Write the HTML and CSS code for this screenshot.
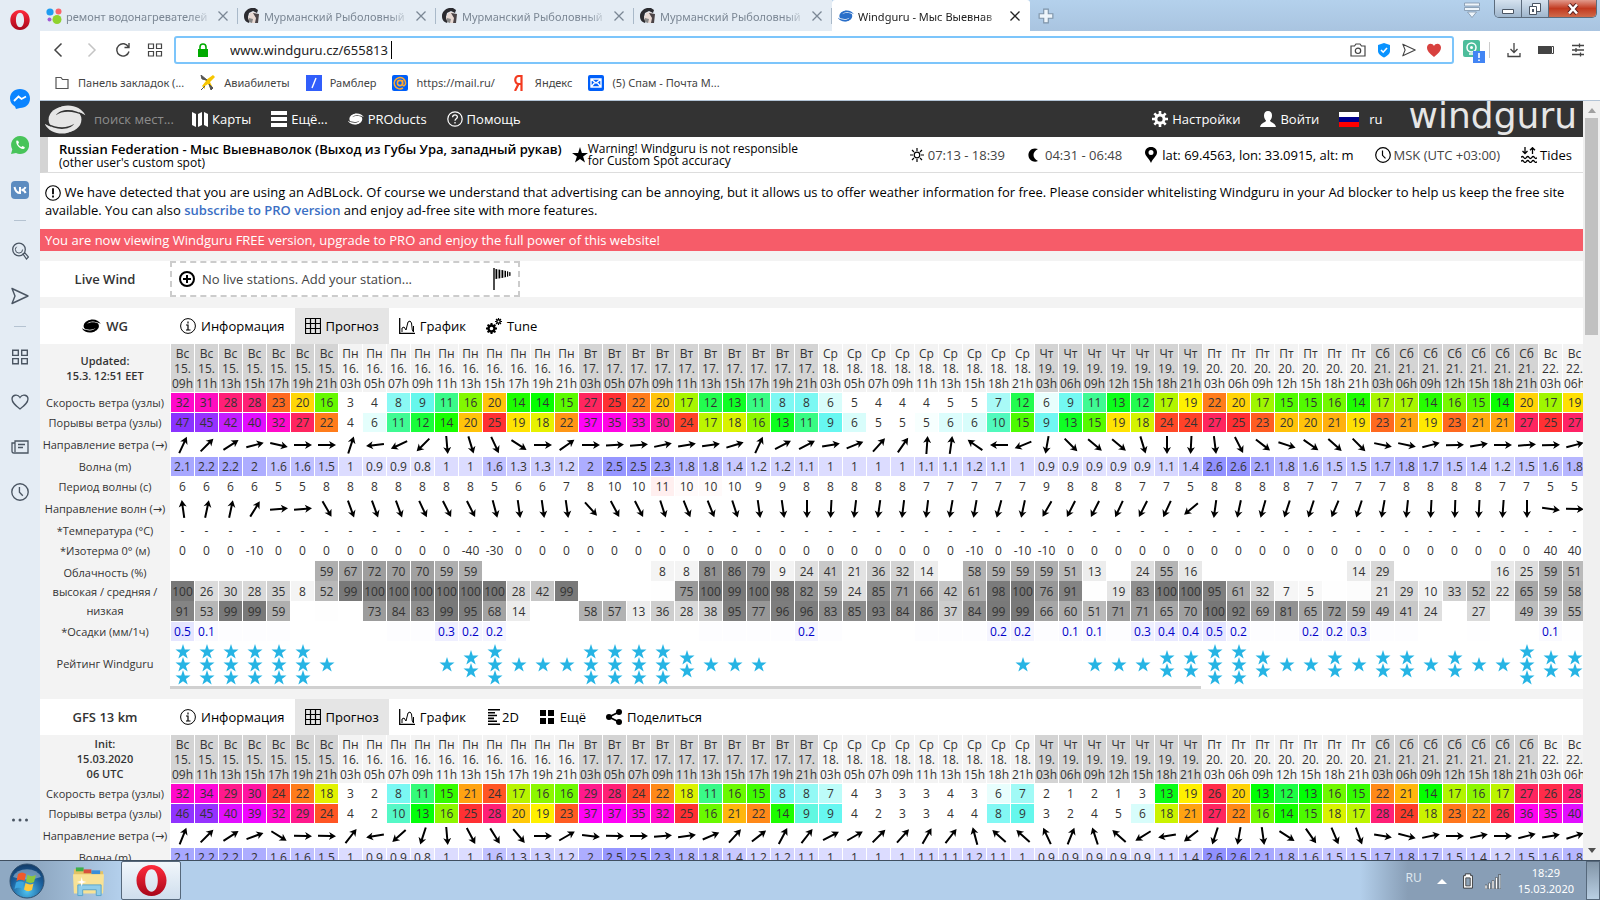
FILE: index.html
```html
<!DOCTYPE html>
<html lang="ru">
  <head>
    <meta charset="utf-8">
    <title>Windguru - Мыс Выевнаволок</title>
    <link rel="stylesheet" href="styles.css">
  </head>
  <body>
    <svg class="sprite" aria-hidden="true">
      <symbol id="i-close" viewBox="0 0 12 12"><path d="M1.500 1.500l9 9M10.500 1.500l-9 9" stroke="currentColor" stroke-width="1.300" fill="none"/></symbol>
      <symbol id="i-fish" viewBox="0 0 16 16"><path d="M7 0C3 1 0 4 0 8s2 6 5 7l1-3-2-3 1-4 4-2 4 2 1-3-3-2z" fill="#2b2b30"/><path d="M6 5l4-1 3 2 1 4-2 5H8l-3-2-1-3z" fill="#e8d9d3"/><path d="M9 5l6 1-1 9h-3l1-5z" fill="#4a4346"/><path d="M5 10l4 1-1 4-3-1z" fill="#888"/></symbol>
      <symbol id="i-swirl" viewBox="0 0 42 30">
        <ellipse cx="20.500" cy="15" rx="17" ry="13.500" fill="currentColor"/>
        <path d="M12 4C22-3 37 1 41.500 10.500 36 7 30 6 24 6z" fill="currentColor"/>
        <path d="M12 4C22-3 37 1 41.500 10.500 36 7 30 6 24 6z" fill="currentColor" transform="rotate(180 20.500 15)"/>
        <path d="M11 10.500C16 3.500 30 3 41 11l-2.500-.2C30 6 18 5.500 11 10.500z" style="fill:var(--cut)"/>
        <path d="M11 10.500C16 3.500 30 3 41 11l-2.500-.2C30 6 18 5.500 11 10.500z" style="fill:var(--cut)" transform="rotate(180 20.500 15)"/>
      </symbol>
      <symbol id="i-map" viewBox="0 0 16 16"><path d="M0 1l4 2v13l-4-2zM6 3l4-2v13l-4 2zM12 1l4 2v13l-4-2z" fill="currentColor"/></symbol>
      <symbol id="i-menu" viewBox="0 0 16 16"><path d="M0 0h16v4H0zM0 6h16v4H0zM0 12h16v4H0z" fill="currentColor"/></symbol>
      <symbol id="i-help" viewBox="0 0 16 16"><circle cx="8" cy="8" r="7.200" fill="none" stroke="currentColor" stroke-width="1.200"/><path d="M5.600 6.200C5.700 3 10.500 3.200 10.400 6 10.300 7.800 8 7.700 8 9.800M8 11v1.500" fill="none" stroke="currentColor" stroke-width="1.300"/></symbol>
      <symbol id="i-gear" viewBox="0 0 16 16"><path d="M8 0v16M0 8h16M2.300 2.300l11.400 11.400M13.700 2.300L2.300 13.700" stroke="currentColor" stroke-width="2.600"/><circle cx="8" cy="8" r="4.200" fill="none" stroke="currentColor" stroke-width="2.600"/><circle cx="8" cy="8" r="2.600" style="fill:var(--cut)"/></symbol>
      <symbol id="i-user" viewBox="0 0 16 16"><path d="M8 0c2.600 0 4 1.800 4 4.500C12 7 11 8.500 10 9.500c0 2 5 2 6 6.500H0c1-4.500 6-4.500 6-6.500-1-1-2-2.500-2-5C4 1.800 5.400 0 8 0z" fill="currentColor"/></symbol>
      <symbol id="i-star" viewBox="0 0 16 16"><path d="M8 0l1.900 5.900H16l-4.900 3.700L13 15.500l-5-3.600-5 3.600 1.900-5.900L0 5.900h6.100z" fill="currentColor"/></symbol>
      <symbol id="i-sun" viewBox="0 0 16 16"><circle cx="8" cy="8" r="2.800" fill="none" stroke="currentColor" stroke-width="1.200"/><path d="M8 1v3M8 12v3M1 8h3M12 8h3M3 3l2 2M11 11l2 2M13 3l-2 2M5 11l-2 2" stroke="currentColor" stroke-width="1.200"/></symbol>
      <symbol id="i-moon" viewBox="0 0 16 16"><path d="M12 2C6 0 2 4 2.500 9c.5 4 5 7 9.500 5-6-3-6-9 0-12z" fill="currentColor"/></symbol>
      <symbol id="i-pin" viewBox="0 0 16 16"><path d="M8 0c4 0 6 2.500 6 5.500C14 9 10 11 8 16 6 11 2 9 2 5.500 2 2.500 4 0 8 0zm0 3a2.500 2.500 0 1 0 0 5 2.500 2.500 0 0 0 0-5z" fill="currentColor" fill-rule="evenodd"/></symbol>
      <symbol id="i-clock" viewBox="0 0 16 16"><circle cx="8" cy="8" r="7.300" fill="none" stroke="currentColor" stroke-width="1.200"/><path d="M7.500 3.500v4.800l3 3" fill="none" stroke="currentColor" stroke-width="1.200"/></symbol>
      <symbol id="i-tides" viewBox="0 0 16 16"><path d="M4 0v6M1.500 4L4 6.500 6.500 4M11.500 7V1M9 3.200L11.500.7 14 3.200M0 10.500q1.300-2 2.700 0t2.700 0 2.700 0 2.700 0 2.700 0 2.500 0M0 14.500q1.300-2 2.700 0t2.700 0 2.700 0 2.700 0 2.700 0 2.500 0" fill="none" stroke="currentColor" stroke-width="1.300"/></symbol>
      <symbol id="i-warn" viewBox="0 0 16 16"><circle cx="8" cy="8" r="7.300" fill="none" stroke="currentColor" stroke-width="1.100"/><path d="M8 3.200v6M8 10.500v2" stroke="currentColor" stroke-width="1.800"/></symbol>
      <symbol id="i-plus" viewBox="0 0 16 16"><circle cx="8" cy="8" r="7" fill="none" stroke="currentColor" stroke-width="2"/><path d="M8 4v8M4 8h8" stroke="currentColor" stroke-width="2"/></symbol>
      <symbol id="i-sock" viewBox="0 0 18 22"><path d="M1 0v22" stroke="currentColor" stroke-width="1.400"/><path d="M2.500 1l1.800.3v9.400l-1.800.3zM5.500 1.500l1.800.3v8.400l-1.800.3zM8.500 2l1.800.3v7.400l-1.800.3zM11.500 2.600l1.500.3v6.200l-1.500.3zM14 3.300l1.200.3v4.800l-1.200.3zM16.200 4l1.300.3v3.400l-1.300.3z" fill="currentColor"/></symbol>
      <symbol id="i-info" viewBox="0 0 16 16"><circle cx="8" cy="8" r="7.400" fill="none" stroke="currentColor"/><path d="M8 3.500v2M6 7h2v4.500M6 12h4.500" fill="none" stroke="currentColor" stroke-width="1.200"/></symbol>
      <symbol id="i-grid" viewBox="0 0 16 16"><path d="M.5.500h15v15H.500zM.500 5.500h15M.500 10.500h15M5.500.500v15M10.500.500v15" fill="none" stroke="currentColor" stroke-width="1.200"/></symbol>
      <symbol id="i-graph" viewBox="0 0 16 16"><path d="M.7 0v15.300H16" fill="none" stroke="currentColor" stroke-width="1.300"/><path d="M3 14V10l2-1 2 3 2-8 2-1 1.500 2 .8 7 1.200 2V8" fill="none" stroke="currentColor"/></symbol>
      <symbol id="i-tune" viewBox="0 0 16 16"><circle cx="5.500" cy="10.500" r="3" fill="none" stroke="currentColor" stroke-width="2.400"/><path d="M5.500 5v2M5.500 14v2M0 10.500h2M9 10.500h2M1.600 6.600L3 8M8 13l1.400 1.400M1.600 14.400L3 13M8 8l1.400-1.400" stroke="currentColor" stroke-width="2"/><circle cx="12.500" cy="3.500" r="1.700" fill="none" stroke="currentColor" stroke-width="1.400"/><path d="M12.500 0v1.500M12.500 5.500V7M9 3.500h1.500M14.500 3.500H16M10 1l1 1M14 5l1 1M15 1l-1 1M11 5l-1 1" stroke="currentColor" stroke-width="1.200"/></symbol>
      <symbol id="i-2d" viewBox="0 0 16 16"><path d="M2 .8h12M2 3.700h7M2 6.500h9M2 9.400h6M2 12.300h9M2 15.200h12" fill="none" stroke="currentColor" stroke-width="1.600"/></symbol>
      <symbol id="i-blocks" viewBox="0 0 16 16"><path d="M1 1h6v6H1zM9 1h6v6H9zM1 9h6v6H1zM9 9h6v6H9z" fill="currentColor"/></symbol>
      <symbol id="i-share" viewBox="0 0 16 16"><path d="M13 3L3 8l10 5" fill="none" stroke="currentColor" stroke-width="1.800"/><circle cx="13" cy="3" r="3" fill="currentColor"/><circle cx="3" cy="8" r="3" fill="currentColor"/><circle cx="13" cy="13" r="3" fill="currentColor"/></symbol>
      <symbol id="i-send" viewBox="0 0 18 18"><path d="M1 1.500L17 9 1 16.500 4 9z" fill="none" stroke="currentColor" stroke-width="1.400" stroke-linejoin="round"/></symbol>
      <symbol id="i-tiles" viewBox="0 0 16 16"><path d="M1.500 2h5v4.500h-5zM9.500 2h5v4.500h-5zM1.500 9.500h5V14h-5zM9.500 9.500h5V14h-5z" fill="none" stroke="currentColor" stroke-width="1.200"/></symbol>
      <symbol id="i-opera" viewBox="0 0 32 32"><defs><linearGradient id="og" x1="0" y1="0" x2="0" y2="1"><stop offset="0" stop-color="#ff2b3c"/><stop offset="1" stop-color="#a8061a"/></linearGradient></defs><path d="M16 0c9 0 15.500 7 15.500 16S25 32 16 32 .5 25 .5 16 7 0 16 0zm0 4.500c-4 0-6.500 5-6.500 11.500S12 27.500 16 27.500 22.500 22.500 22.500 16 20 4.500 16 4.500z" fill="url(#og)" fill-rule="evenodd"/></symbol>
      <symbol id="i-arrow" viewBox="0 0 20 20"><path d="M9 19V6.500L6 8l4-7 4 7-3-1.500V19z" fill="#000"/></symbol>
    </svg>

    <div class="desktop">
      <nav class="sidebar">
        <svg class="opera"><use href="#i-opera"/></svg>
        <svg class="messenger" viewBox="0 0 20 20"><path d="M10 0c6 0 10 4 10 9.500S16 19 10 19l-4 1-1-2.500C2 16 0 13 0 9.500 0 4 4 0 10 0z" fill="#0a84ff"/><path d="M4 12l4.500-4.500 3 2.500L16 7.500" fill="none" stroke="#fff" stroke-width="1.800"/></svg>
        <svg viewBox="0 0 18 18"><path d="M9 0a9 9 0 1 1-4 17l-5 1 1.300-4.500A9 9 0 0 1 9 0z" fill="#48c45a"/><path d="M5.500 4.500c-1.500 3 3 9 7 8.500 1.500-.5 1.500-1.500 1-2l-2-1-1.200 1C9 10.500 7.500 9 7 8l1-1.200-.8-2z" fill="#fff"/></svg>
        <svg viewBox="0 0 18 18"><rect width="18" height="18" rx="4" fill="#5c8cc0"/><path d="M3.500 6c.8 4 3 6 5.500 6V6m5.500 0c-.8 2-2 2.800-4 3 2 0 3.500 1.500 4.200 3" fill="none" stroke="#fff" stroke-width="2"/></svg>
        <hr>
        <svg viewBox="0 0 18 18"><circle cx="8" cy="7.500" r="6.300" fill="none" stroke="currentColor" stroke-width="1.300"/><circle cx="8" cy="7.500" r="3.600" fill="none" stroke="currentColor" stroke-dasharray="14 9"/><path d="M12 12l2-1 3.500 4-2 2z" fill="none" stroke="currentColor" stroke-width="1.200"/></svg>
        <svg><use href="#i-send"/></svg>
        <hr>
        <svg><use href="#i-tiles"/></svg>
        <svg viewBox="0 0 18 18"><path d="M9 16C4 12 1 9.500 1 6c0-4 5.500-5.500 8-1.500C11.500.5 17 2 17 6c0 3.500-3 6-8 10z" fill="none" stroke="currentColor" stroke-width="1.300"/></svg>
        <svg viewBox="0 0 18 18"><path d="M4 3h13v12H3c-1.500 0-2-.8-2-2V5h3zM4 5v9M7 6.500h7M7 9.500h5" fill="none" stroke="currentColor" stroke-width="1.300"/></svg>
        <svg><use href="#i-clock"/></svg>
        <svg class="dots" viewBox="0 0 18 18"><circle cx="2.500" cy="9" r="1.500"/><circle cx="9" cy="9" r="1.500"/><circle cx="15.500" cy="9" r="1.500"/></svg>
      </nav>

      <div class="browser">
        <div class="tabs">
          <div class="tab">
            <svg viewBox="0 0 16 16"><circle cx="4" cy="4" r="3.600" fill="#1e9cf0"/><circle cx="12.500" cy="3.500" r="3" fill="#f9636a"/><circle cx="11" cy="11.500" r="4.500" fill="#8fd32e"/><circle cx="3.500" cy="11.500" r="2" fill="#a05bd6"/></svg>
            <span>ремонт водонагревателей</span><button aria-label="Закрыть"><svg><use href="#i-close"/></svg></button>
          </div>
          <div class="tab"><svg><use href="#i-fish"/></svg><span>Мурманский Рыболовный</span><button aria-label="Закрыть"><svg><use href="#i-close"/></svg></button></div>
          <div class="tab"><svg><use href="#i-fish"/></svg><span>Мурманский Рыболовный</span><button aria-label="Закрыть"><svg><use href="#i-close"/></svg></button></div>
          <div class="tab"><svg><use href="#i-fish"/></svg><span>Мурманский Рыболовный</span><button aria-label="Закрыть"><svg><use href="#i-close"/></svg></button></div>
          <div class="tab current"><svg class="fav"><use href="#i-swirl"/></svg><span>Windguru - Мыс Выевнав</span><button aria-label="Закрыть"><svg><use href="#i-close"/></svg></button></div>
          <button class="new-tab" aria-label="Новая вкладка"><svg viewBox="0 0 14 14"><path d="M5 1h4v4h4v4H9v4H5V9H1V5h4z" fill="#eef5fb" stroke="#7d93a8"/></svg></button>
          <svg class="tab-menu" viewBox="0 0 16 16"><path d="M.5 1h15v3H.500zM.500 5.500h15v3H.500zM3.500 10h9L8 15.500z" fill="#eef5fb" stroke="#7d93a8" stroke-width=".8"/></svg>
          <div class="window-buttons">
            <button aria-label="Свернуть"><svg viewBox="0 0 12 12"><path d="M.5 6.500h11v4H.500z" fill="#fff" stroke="#4a5563"/></svg></button>
            <button aria-label="Развернуть"><svg viewBox="0 0 12 12"><path d="M3.500.5h8v8h-8z" fill="#fff" stroke="#4a5563"/><path d="M.5 3.500h7v8h-7z" fill="#fff" stroke="#4a5563"/><path d="M3 6h2v3H3z" fill="#4a5563"/></svg></button>
            <button class="win-close" aria-label="Закрыть окно"><svg viewBox="0 0 12 12"><path d="M2 1.500l8 9M10 1.500l-8 9" stroke="#5a2020" stroke-width="4.400"/><path d="M2 1.500l8 9M10 1.500l-8 9" stroke="#fff" stroke-width="2.600"/></svg></button>
          </div>
        </div>

        <div class="address-row">
          <svg viewBox="0 0 16 16"><path d="M10.500 1.500L4 8l6.500 6.500" fill="none" stroke="currentColor" stroke-width="1.500"/></svg>
          <svg class="off" viewBox="0 0 16 16"><path d="M5.500 1.500L12 8l-6.500 6.500" fill="none" stroke="currentColor" stroke-width="1.500"/></svg>
          <svg viewBox="0 0 16 16"><path d="M13.500 5A6.200 6.200 0 1 0 14 9.500M14 1v4.500H9.500" fill="none" stroke="currentColor" stroke-width="1.400"/></svg>
          <svg><use href="#i-tiles"/></svg>
          <div class="address">
            <svg class="lock" viewBox="0 0 14 14"><path d="M2 6h10v8H2z" fill="#0a0"/><path d="M4 6.500V4q0-3 3-3t3 3v2.500" fill="none" stroke="#0a0" stroke-width="1.600"/></svg>
            <div class="url-wrap"><input type="text" value="www.windguru.cz/655813" aria-label="Адрес"><i class="caret"></i></div>
            <svg viewBox="0 0 16 16"><path d="M1 4h3.500L6 2h4l1.500 2H15v10H1z" fill="none" stroke="#444" stroke-width="1.200"/><circle cx="8" cy="8.800" r="2.700" fill="none" stroke="#444" stroke-width="1.200"/></svg>
            <svg viewBox="0 0 16 16"><path d="M8 1l6 2v6c0 3-3 5-6 6.500C5 14 2 12 2 9V3z" fill="#0a93ff"/><path d="M5 8l2.200 2.200L11 6" fill="none" stroke="#fff" stroke-width="1.600"/></svg>
            <svg class="small-send"><use href="#i-send"/></svg>
            <svg viewBox="0 0 16 16"><path d="M8 15C3 11 1 8.500 1 5.500 1 1 6.500.5 8 4c1.500-3.500 7-3 7 1.500C15 8.500 13 11 8 15z" fill="#d8413f"/></svg>
          </div>
          <svg class="ext" viewBox="0 0 24 24"><rect width="17" height="17" rx="2" fill="#4dbd9b"/><circle cx="8.500" cy="7.500" r="4.500" fill="none" stroke="#fff" stroke-width="1.500"/><circle cx="8.500" cy="7.500" r="1.500" fill="#fff"/><path d="M6 14h5" stroke="#fff" stroke-width="1.500"/><path d="M10 11h12v12H10z" fill="#4285f4"/><path d="M16 13v5M16 19.500v1.500" stroke="#fff" stroke-width="1.600"/></svg>
          <i class="sep"></i>
          <svg viewBox="0 0 16 16"><path d="M8 1v9M4.500 7L8 10.500 11.500 7M2 11v3.500h12V11" fill="none" stroke="currentColor" stroke-width="1.300"/></svg>
          <svg viewBox="0 0 16 16"><path d="M0 4h13v8H0z" fill="#444"/><path d="M13.500 4.500h2v7h-2z" fill="none" stroke="#444"/></svg>
          <svg viewBox="0 0 16 16"><path d="M2 3.500h12M2 8h12M2 12.500h12M9.500 1.500v4M6 6v4M10.500 10.500v4" stroke="currentColor" stroke-width="1.300"/></svg>
        </div>

        <div class="bookmarks">
          <a href="#" class="folder"><svg viewBox="0 0 16 16"><path d="M2 2.500h5L8.500 4.500H14v9H2z" fill="none" stroke="#555" stroke-width="1.200"/></svg>Панель закладок (...</a>
          <a href="#"><svg viewBox="0 0 16 16"><path d="M1 3l5 2 7-5 2 2-5 5 3 6-1.500 1L8 9l-3 2v3l-3-3 4-5z" fill="#f7c600"/><path d="M7 5L1 0l1 4zM9 9l2 6 2-2zM1 15l4-4" fill="#555" stroke="#555"/></svg>Авиабилеты</a>
          <a href="#"><svg viewBox="0 0 16 16"><path d="M0 0h16v16H0z" fill="#315efb"/><path d="M10 3L6 13" stroke="#fff" stroke-width="1.400"/></svg>Рамблер</a>
          <a href="#"><svg viewBox="0 0 16 16"><rect width="16" height="16" rx="2" fill="#005ff9"/><circle cx="8" cy="8" r="2.600" fill="none" stroke="#ffa930" stroke-width="1.600"/><path d="M10.600 5v4c0 3 3 2 3-1A5.700 5.700 0 1 0 11 13" fill="none" stroke="#ffa930" stroke-width="1.500"/></svg>https://mail.ru/</a>
          <a href="#"><svg viewBox="0 0 16 16"><path d="M10.500 16V1H8C3 1 3 9 8 9h2M7.500 9L4 16" fill="none" stroke="#f33a1f" stroke-width="2.200"/></svg>Яндекс</a>
          <a href="#"><svg viewBox="0 0 16 16"><rect width="16" height="16" rx="2" fill="#005ff9"/><path d="M3 4h10v8H3zM3 4l5 4 5-4M3 12l3.500-4M13 12L9.500 8" fill="none" stroke="#fff" stroke-width="1.400"/></svg>(5) Спам - Почта М...</a>
        </div>

        <div class="viewport">
          <div class="page">
            <header class="top">
              <svg class="logo"><use href="#i-swirl"/></svg>
              <input class="search" type="text" placeholder="поиск мест..." aria-label="поиск мест">
              <a href="#"><svg><use href="#i-map"/></svg>Карты</a>
              <a href="#"><svg><use href="#i-menu"/></svg>Ещё...</a>
              <a href="#"><svg><use href="#i-swirl"/></svg>PROducts</a>
              <a href="#"><svg><use href="#i-help"/></svg>Помощь</a>
              <a href="#" class="push"><svg><use href="#i-gear"/></svg>Настройки</a>
              <a href="#"><svg><use href="#i-user"/></svg>Войти</a>
              <a href="#" class="lang"><i class="flag"></i>ru</a>
              <span class="wordmark">windguru</span>
            </header>

            <section class="spot">
              <div class="spot-name">
                <h1>Russian Federation - Мыс Выевнаволок (Выход из Губы Ура, западный рукав)</h1>
                <p>(other user's custom spot)</p>
              </div>
              <svg class="spot-star"><use href="#i-star"/></svg>
              <p class="spot-warning">Warning! Windguru is not responsible<br>for Custom Spot accuracy</p>
              <ul class="spot-info">
                <li><svg><use href="#i-sun"/></svg>07:13 - 18:39</li>
                <li><svg><use href="#i-moon"/></svg>04:31 - 06:48</li>
                <li class="dark"><svg><use href="#i-pin"/></svg>lat: 69.4563, lon: 33.0915, alt: m</li>
                <li><svg><use href="#i-clock"/></svg>MSK (UTC +03:00)</li>
                <li class="dark"><svg><use href="#i-tides"/></svg>Tides</li>
              </ul>
            </section>

            <p class="adblock"><svg><use href="#i-warn"/></svg> We have detected that you are using an AdBLock. Of course we understand that advertising can be annoying, but it allows us to offer weather information for free. Please consider whitelisting Windguru in your Ad blocker to help us keep the free site available. You can also <a href="#">subscribe to PRO version</a> and enjoy ad-free site with more features.</p>
            <p class="upgrade">You are now viewing Windguru FREE version, upgrade to PRO and enjoy the full power of this website!</p>

            <section class="strip live">
              <h2>Live Wind</h2>
              <button class="add-station"><svg><use href="#i-plus"/></svg><span>No live stations. Add your station...</span><svg class="sock"><use href="#i-sock"/></svg></button>
            </section>

            <section class="model">
              <div class="strip">
                <h2><svg class="wg"><use href="#i-swirl"/></svg>WG</h2>
                <button><svg><use href="#i-info"/></svg>Информация</button>
                <button class="on"><svg><use href="#i-grid"/></svg>Прогноз</button>
                <button><svg><use href="#i-graph"/></svg>График</button>
                <button><svg><use href="#i-tune"/></svg>Tune</button>
              </div>
              <table id="wg"></table>
              <div class="hscroll"><i></i></div>
            </section>

            <section class="model">
              <div class="strip">
                <h2>GFS 13 km</h2>
                <button><svg><use href="#i-info"/></svg>Информация</button>
                <button class="on"><svg><use href="#i-grid"/></svg>Прогноз</button>
                <button><svg><use href="#i-graph"/></svg>График</button>
                <button class="tight"><svg><use href="#i-2d"/></svg>2D</button>
                <button><svg><use href="#i-blocks"/></svg>Ещё</button>
                <button><svg><use href="#i-share"/></svg>Поделиться</button>
              </div>
              <table id="gfs"></table>
            </section>
          </div>
          <div class="vscroll">
            <svg viewBox="0 0 10 6"><path d="M1 6l4-5 4 5z" fill="#a0a0a0"/></svg>
            <i></i>
            <svg viewBox="0 0 10 6"><path d="M1 0l4 5 4-5z" fill="#505050"/></svg>
          </div>
        </div>
      </div>
    </div>

    <footer class="taskbar">
      <button class="start" aria-label="Пуск"><svg viewBox="0 0 36 36"><defs><radialGradient id="orb" cx=".5" cy=".8" r=".8"><stop offset="0" stop-color="#4fc3f0"/><stop offset=".6" stop-color="#1b5f9c"/><stop offset="1" stop-color="#123a66"/></radialGradient></defs><circle cx="18" cy="18" r="17" fill="url(#orb)" stroke="#30506f"/><path d="M4 14A15 12 0 0 1 32 14q-14 5-28 0z" fill="#fff" opacity=".35"/><path d="M9 11q4-3 8 0l-1.500 7q-4-2.500-8 0z" fill="#f0592a"/><path d="M18.500 11.500q4 3 8.500.5l-2 7q-4 2-8-.5z" fill="#8cc63f"/><path d="M7 19.500q4-2.500 8 0l-1.500 6.500q-4-2.500-8 0z" fill="#3ca5e0"/><path d="M16.500 20q4 2.500 8 .5l-1.500 6.500q-4 2.500-8-.5z" fill="#ffc93c"/></svg></button>
      <button class="explorer" aria-label="Проводник"><svg viewBox="0 0 34 32"><path d="M2 4h10l2 2h18v22H2z" fill="#e3c264"/><path d="M4 2h8v4H4z" fill="#3fae49"/><path d="M12 4h8v4h-8z" fill="#d9503c"/><path d="M20 5h9v4h-9z" fill="#3a8fd8"/><path d="M1 9h32l-1 20H2z" fill="#f8e296"/><path d="M6 20h24v11h-5v-6H11v6H6z" fill="#8fcdea" stroke="#5aa5cc"/><path d="M10 12l1 4 4 1-4 1-1 4-1-4-4-1 4-1z" fill="#fff"/></svg></button>
      <button class="app" aria-label="Opera"><svg><use href="#i-opera"/></svg></button>
      <div class="tray">
        <span class="kb">RU</span>
        <svg class="up" viewBox="0 0 10 6"><path d="M0 6l5-5 5 5z" fill="#fff"/></svg>
        <svg viewBox="0 0 16 18"><path d="M5 1h6v2h2v14H3V3h2z" fill="#fff" stroke="#333"/><path d="M5.500 5.500h5v9h-5z" fill="#8da3b8" stroke="#444"/></svg>
        <svg viewBox="0 0 16 16"><path d="M0 12h2v4H0zM3.500 10h2v6h-2zM7 7.500h2V16H7zM10.500 4.500h2V16h-2z" fill="#fff" stroke="#333" stroke-width=".5"/><path d="M13.500 1.500H16V16h-2.500z" fill="#b9c6d2" stroke="#333" stroke-width=".5"/></svg>
        <time>18:29<br>15.03.2020</time>
      </div>
      <div class="show-desktop"></div>
    </footer>
    <script src="forecast.js"></script>
  </body>
</html>
```

FILE: styles.css
```css
* {
  box-sizing: border-box;
}

body {
  display: flex;
  flex-direction: column;
  height: 100vh;
  margin: 0;
  overflow: hidden;
  font-family: "Open Sans", "Noto Sans", sans-serif;
  font-size: 13px;
  color: #333;
}

h1, h2, p, ul {
  margin: 0;
  padding: 0;
  list-style: none;
}

a {
  color: inherit;
  text-decoration: none;
}

button, input {
  padding: 0;
  border: 0;
  background: none;
  color: inherit;
  font: inherit;
}

svg {
  flex: none;
  width: 16px;
  height: 16px;
}

.sprite {
  position: absolute;
  width: 0;
  height: 0;
}

.desktop {
  display: flex;
  flex: 1;
  min-height: 0;
}

/* Opera sidebar */
.sidebar {
  display: flex;
  flex-direction: column;
  align-items: center;
  gap: 27px;
  width: 40px;
  padding: 10px 0 31px;
  background: #e4ecf4;
  color: #4a5562;
}

.sidebar svg {
  width: 18px;
  height: 18px;
}

.sidebar .opera {
  width: 20px;
  height: 20px;
  margin-bottom: 32px;
}

.sidebar .messenger {
  width: 20px;
  height: 20px;
}

.sidebar hr {
  width: 12px;
  margin: -6px 0;
  border: 0;
  border-top: 1px solid #b5c3d1;
}

.sidebar .dots {
  margin-top: auto;
  fill: #4a5562;
}

.browser {
  display: flex;
  flex: 1;
  flex-direction: column;
  min-width: 0;
  background: #fff;
}

/* tabs */
.tabs {
  display: flex;
  align-items: stretch;
  height: 31px;
  background: linear-gradient(#b4d1ec, #a9c4e0);
  font-family: "Noto Sans", sans-serif;
  font-size: 11px;
}

.tab {
  display: flex;
  align-items: center;
  gap: 4px;
  width: 198px;
  padding: 1px 9px 0 6px;
  background: linear-gradient(90deg, #a9b9c9, #a9b9c9) right center / 1px 16px no-repeat #e4ecf4;
  color: #7b8794;
}

.tab span {
  flex: 1;
  overflow: hidden;
  white-space: nowrap;
  mask-image: linear-gradient(90deg, #000 85%, transparent);
}

.tab button {
  display: flex;
}

.tab button svg {
  width: 12px;
  height: 12px;
}

.tab.current {
  border-radius: 3px 3px 0 0;
  background: #fff;
  color: #222;
}

.tab .fav {
  --cut: #fff;
  color: #2a6fc9;
}

.new-tab {
  display: flex;
  align-items: center;
  padding-left: 8px;
}

.tab-menu {
  margin: 2px 14px 0 auto;
}

.window-buttons {
  display: flex;
  height: 18px;
  margin-right: 3px;
  border: 1px solid #5b6b7c;
  border-top: 0;
  border-radius: 0 0 5px 5px;
  overflow: hidden;
}

.window-buttons button {
  display: flex;
  align-items: center;
  justify-content: center;
  width: 27px;
  border-right: 1px solid #5b6b7c;
  background: linear-gradient(#d5e2ef, #9fb6cd);
}

.window-buttons svg {
  width: 12px;
  height: 12px;
}

.window-buttons .win-close {
  width: 47px;
  border-right: 0;
  background: linear-gradient(#e29a8c, #c23a20 50%, #d06a4a);
}

/* address bar */
.address-row {
  display: flex;
  align-items: center;
  gap: 16px;
  height: 38px;
  padding: 0 14px 0 11px;
  color: #444;
}

.address-row .off {
  color: #c4c4c4;
}

.address {
  display: flex;
  flex: 1;
  align-items: center;
  gap: 10px;
  height: 28px;
  margin-left: -5px;
  padding: 0 10px 0 20px;
  border: 2px solid #7cc5fb;
  border-radius: 3px;
  color: #444;
}

.address .lock {
  width: 14px;
  height: 14px;
}

.address .small-send {
  width: 14px;
  height: 14px;
}

.url-wrap {
  display: flex;
  flex: 1;
  align-items: center;
  padding-left: 10px;
}

.address input {
  width: 161px;
  outline: 0;
  color: #222;
  font-family: "Noto Sans", sans-serif;
  font-size: 13px;
}

.caret {
  width: 1px;
  height: 18px;
  background: #000;
}

.address-row .ext {
  width: 24px;
  height: 24px;
  margin: 4px -14px 0 -7px;
}

.sep {
  width: 1px;
  height: 16px;
  background: #ccc;
}

.bookmarks {
  display: flex;
  align-items: center;
  gap: 16px;
  height: 32px;
  padding: 0 14px 4px;
  border-bottom: 1px solid #b3c4d6;
  color: #444;
  font-family: "Noto Sans", sans-serif;
  font-size: 11px;
}

.bookmarks a {
  display: flex;
  align-items: center;
  gap: 8px;
}

/* page */
.viewport {
  display: flex;
  flex: 1;
  min-height: 0;
}

.page {
  flex: 1;
  min-width: 0;
  overflow: hidden;
  background: #f3f3f3;
}

.top {
  --cut: #333;
  display: flex;
  align-items: center;
  gap: 20px;
  height: 36px;
  padding: 0 6px 0 5px;
  background: #333;
  color: #fff;
}

.top .logo {
  width: 41px;
  height: 29px;
  margin-right: -12px;
  color: #e6e6e6;
}

.search {
  width: 80px;
  margin-right: -2px;
}

.search::placeholder {
  color: #8c8c8c;
  opacity: 1;
}

.top a {
  display: flex;
  align-items: center;
  gap: 4px;
}

.top .push {
  margin-left: auto;
}

.top .lang {
  gap: 10px;
}

.flag {
  width: 20px;
  height: 15px;
  background: linear-gradient(#fff 33%, #00008b 33% 66%, #f00 66%);
}

.wordmark {
  margin: -6px 0 0 6px;
  color: #e6e6e6;
  font-family: "DejaVu Sans", sans-serif;
  font-size: 36px;
  line-height: 36px;
}

.spot {
  display: flex;
  align-items: center;
  height: 36px;
  padding: 0 11px;
  border-bottom: 1px solid #ddd;
  border-left: 8px solid #d4d4d4;
  background: #fff;
  color: #000;
}

.spot h1 {
  font-size: 13px;
  font-weight: 600;
  line-height: 16px;
}

.spot p {
  font-size: 12px;
  line-height: 12px;
}

.spot-star {
  margin-left: 10px;
}

.spot-info {
  display: flex;
  gap: 21px;
  margin-left: auto;
  color: #444;
}

.spot-info li {
  display: flex;
  align-items: center;
  gap: 3px;
}

.spot-info svg,
.spot-info .dark {
  color: #000;
}

.adblock {
  padding: 10px 5px;
  background: #fff;
  color: #000;
  line-height: 18px;
}

.adblock svg {
  vertical-align: -4px;
}

.adblock a {
  color: #3b6fc4;
  font-weight: 600;
}

.upgrade {
  padding: 0 5px;
  background: #f65c69;
  color: #fff;
  line-height: 22px;
}

.strip {
  --cut: #fff;
  display: flex;
  height: 36px;
  background: #fff;
}

.strip h2 {
  display: flex;
  align-items: center;
  justify-content: center;
  gap: 5px;
  width: 130px;
  font-size: 13px;
  font-weight: 600;
}

.strip .wg {
  width: 19px;
  color: #000;
}

.strip > button {
  display: flex;
  align-items: center;
  gap: 5px;
  padding: 0 10px;
  color: #000;
}

.strip > .tight {
  gap: 0;
}

.strip > .on {
  background: #e5e5e5;
}

.live {
  margin: 10px 0 11px;
}

.strip > .add-station {
  gap: 7px;
  width: 350px;
  padding: 0 7px;
  border: 2px dashed #ccc;
}

.add-station span {
  color: #444;
}

.add-station .sock {
  width: 18px;
  height: 22px;
  margin-left: auto;
}

.model {
  margin-bottom: 10px;
}

/* forecast table */
table {
  width: 1px;
  table-layout: fixed;
  border-spacing: 0;
  background: #fff;
  font-size: 12px;
  line-height: 15px;
}

.label-col {
  width: 130px;
}

.hour-col {
  width: 24px;
}

th, td {
  height: 20px;
  padding: 0;
  text-align: center;
  white-space: nowrap;
}

th {
  padding-bottom: 2px;
  background: #f3f3f3;
  font-family: "Open Sans", "DejaVu Sans", sans-serif;
  font-size: 11px;
  font-weight: 400;
}

td {
  border: solid #fff;
  border-width: 0 0 1px 1px;
}

.head th {
  font-weight: 600;
}

.head td {
  height: 49px;
  background: #f3f3f3;
}

.head .odd {
  background: #d4d4d4;
}

.arrows td {
  height: 24px;
}

.arrows svg {
  display: block;
  width: 20px;
  height: 20px;
  margin: auto;
}

.cloud td {
  border-bottom: 0;
}

.cloud th {
  padding: 0;
  line-height: 19px;
}

.cloud-last td {
  height: 21px;
}

.rain td {
  color: #0000c8;
}

.stars td {
  height: 44px;
  border-bottom: 0;
}

.stars svg {
  display: block;
  height: 15px;
  margin: -2px auto;
  color: #26b4e4;
}

.hscroll {
  margin-left: 130px;
  background: #fff;
}

.hscroll i {
  display: block;
  width: 73%;
  height: 3px;
  background: #d0d0d0;
}

.vscroll {
  display: flex;
  flex-direction: column;
  align-items: center;
  width: 17px;
  padding: 6px 0;
  background: #f0f0f0;
}

.vscroll svg {
  width: 10px;
  height: 6px;
}

.vscroll i {
  width: 13px;
  height: 29%;
  margin: 5px 0 auto;
  background: #c1c1c1;
}

/* taskbar */
.taskbar {
  display: flex;
  align-items: stretch;
  height: 40px;
  border-top: 1px solid #3f4f60;
  background: linear-gradient(90deg, #8fa9c3, #8fa9c3 40px, #b3cfeb 120px, #b3cfeb 85%, #889eb6 88%);
}

.start {
  display: flex;
  align-items: center;
  padding: 0 9px;
}

.start svg {
  width: 36px;
  height: 36px;
}

.explorer {
  display: flex;
  align-items: center;
  width: 67px;
  padding: 0 18px;
}

.explorer svg {
  width: 33px;
  height: 32px;
}

.app {
  display: flex;
  align-items: center;
  justify-content: center;
  width: 60px;
  border: 1px solid #56687b;
  border-radius: 2px;
  background: linear-gradient(#f1f6fb, #cfdeed);
}

.app svg {
  width: 31px;
  height: 31px;
}

.tray {
  display: flex;
  align-items: center;
  gap: 9px;
  margin-left: auto;
  padding-right: 12px;
  color: #fff;
  font-family: "Noto Sans", sans-serif;
  font-size: 11px;
  line-height: 16px;
  text-align: center;
}

.kb {
  margin: -6px 6px 0 0;
  color: #dde6ee;
  font-size: 12px;
}

.tray .up {
  width: 10px;
  height: 6px;
  margin-right: 4px;
}

.tray time {
  margin-left: 8px;
}

.show-desktop {
  width: 14px;
  border: 1px solid #56687b;
  background: linear-gradient(#8295a8, #b9cfe3);
}
```

FILE: forecast.js
```js
var days = [
  ['Вс', 15, '09 11 13 15 17 19 21'],
  ['Пн', 16, '03 05 07 09 11 13 15 17 19 21'],
  ['Вт', 17, '03 05 07 09 11 13 15 17 19 21'],
  ['Ср', 18, '03 05 07 09 11 13 15 18 21'],
  ['Чт', 19, '03 06 09 12 15 18 21'],
  ['Пт', 20, '03 06 09 12 15 18 21'],
  ['Сб', 21, '03 06 09 12 15 18 21'],
  ['Вс', 22, '03 06']
];

// '_' is an hour without a value
var waves = '2.1 2.2 2.2 2 1.6 1.6 1.5 1 0.9 0.9 0.8 1 1 1.6 1.3 1.3 1.2 2 2.5 2.5 2.3 1.8 1.8 1.4 1.2 1.2 1.1 1 1 1 1 1.1 1.1 1.2 1.1 1 0.9 0.9 0.9 0.9 0.9 1.1 1.4 2.6 2.6 2.1 1.8 1.6 1.5 1.5 1.7 1.8 1.7 1.5 1.4 1.2 1.5 1.6 1.8';

var wg = {
  speed: '32 31.3 28 28 23 19.6 15.6 3 4 8 9 10.9 16.2 20.2 14.1 13.6 15.4 27 25 22.4 20.2 17 12 12.8 11 8.3 8.4 6 5 4 4 4 5 5 7.2 12 5.6 8.6 10.7 13 12 17.2 18.8 22.4 19.7 16.8 15.2 15.2 15.9 14.1 17 17 14.3 16 15.3 13.7 19.7 16.8 19.3',
  gust: '47 45 42 40 32 27 22.4 4 5.7 10.7 12.4 14 20.2 25 19.2 18.3 21.6 37 35 33.4 30 24.2 17.4 18 16.4 12.9 11 8.9 6 5 5 5.2 5.9 6 9.9 15.1 8.7 12.8 15.3 19.2 17.9 24 24.2 27 25 23.4 20.2 20.2 20.8 19.3 23 21.2 19 23 21 21.2 27 25 27.3',
  dir: '25 45 57 75 103 90 90 18 263 245 225 175 163 155 123 90 55 90 87 86 78 80 82 73 25 62 62 80 68 42 35 4 8 305 270 248 190 135 130 130 163 180 183 173 153 128 108 125 132 135 102 102 75 88 80 90 86 88 75',
  period: '6 6 6 6 5 5 8 8 8 8 8 8 8 5 6 6 7 8 10 10 11 10.3 10.3 9.6 9 9 8 8 8 8 8 7 7 7 7 7 9 8 8 8 7 7 5 8 8 8 8 7 7 7 7 8 8 8 8 7 7 5 5',
  waveDir: '352 12 12 32 86 86 150 160 160 160 155 153 153 165 172 172 172 138 152 153 162 158 158 162 172 172 180 183 187 188 187 187 190 190 195 192 210 207 207 205 207 205 230 188 192 196 198 198 203 198 190 186 183 182 183 184 180 98 92',
  temp: '- - - - - - - - - - - - - - - - - - - - - - - - - - - - - - - - - - - - - - - - - - - - - - - - - - - - - - - - - - -',
  iso: '0 0 0 -10 0 0 0 0 0 0 0 0 -40 -30 0 0 0 0 0 0 0 0 0 0 0 0 0 0 0 0 0 0 0 -10 0 -10 -10 0 0 0 0 0 0 0 0 0 0 0 0 0 0 0 0 0 0 0 0 40 40',
  high: '_ _ _ _ _ _ 59 67 72 70 70 59 59 _ _ _ _ _ _ _ 8 8 81 86 79 9 24 41 21 36 32 14 _ 58 59 59 59 51 13 _ 24 55 16 _ _ _ _ _ _ 14 29 _ _ _ _ 16 25 59 51',
  mid: '100 26 30 28 35 8 52 99 100 100 100 100 100 100 28 42 99 _ _ _ 1 75 100 99 100 98 82 59 24 85 71 66 42 61 98 100 76 91 1 19 83 100 100 95 61 32 7 5 1 2 21 29 10 33 52 22 65 59 58',
  low: '91 53 99 99 59 _ 1 _ 73 84 83 99 95 68 14 _ _ 58 57 13 36 28 38 95 77 96 96 83 85 93 84 86 37 84 99 99 66 60 51 71 71 65 70 100 92 69 81 65 72 59 49 41 24 _ 27 _ 49 39 55',
  rain: '0.5 0.1 0.03 0.03 0.03 _ _ _ _ 0.03 0.03 0.3 0.2 0.2 _ _ _ _ _ _ _ _ 0.03 0.03 0.03 0.04 0.2 0.03 _ _ _ 0.03 0.03 0.03 0.2 0.2 0.04 0.1 0.1 0.04 0.3 0.4 0.4 0.5 0.2 0.03 0.03 0.2 0.2 0.3 0.04 0.03 _ _ 0.02 _ _ 0.1 0.02',
  stars: '3 3 3 3 3 3 1 0 0 0 0 1 2 3 1 1 1 3 3 3 3 2 1 1 1 0 0 0 0 0 0 0 0 0 0 1 0 0 1 1 1 2 2 3 3 2 1 1 2 1 2 2 1 2 1 1 3 2 2'
};

var gfs = {
  speed: '32 33.6 29 30 24.2 22.4 18.2 3 2 8.4 11.2 14.6 21.2 23.6 17.3 16.4 15.8 29 28 24 22 18.1 10.9 15.7 14.8 8.4 7.8 6.7 4 3 3 3 4 3 5.6 7.4 2 1 2 1 3 13.1 18.8 26 19.7 13.4 12.2 13.4 15.8 14.6 22 20.6 13.6 17.2 16.4 17.4 27 26 28',
  gust: '46 45 40 39 32 29 23.6 4 2 9.7 13.3 16.4 25 28 20 18.8 23.4 37 37 35 32 25 15.7 20.6 22 14.1 9.2 8.9 4 2 3 3 4 4 8.2 9 3 2 4 5 6 17.7 21.2 27 22 15.8 13.9 15.1 18 17.4 28 24.4 17.7 22.6 22 26 36 35 40',
  dir: '22 45 57 70 122 92 92 38 260 228 198 175 152 148 140 90 60 97 92 90 86 82 67 42 52 28 38 62 60 45 42 30 38 345 312 312 335 22 342 312 238 260 232 198 190 172 123 145 157 160 100 105 78 90 78 90 75 80 72'
};

var windScale = [
  [5, 255, 255, 255],
  [8.9, 103, 247, 241],
  [13.5, 0, 255, 0],
  [18.8, 255, 240, 0],
  [24.7, 255, 50, 44],
  [31.7, 255, 10, 200],
  [38, 255, 0, 255],
  [45, 150, 50, 255],
  [60, 60, 60, 255]
];

function windColor(v) {
  for (var i = 1; i < windScale.length; i++) {
    var a = windScale[i - 1], b = windScale[i];
    if (v <= b[0]) {
      var t = Math.max(0, (v - a[0]) / (b[0] - a[0]));
      return 'rgb(' + [1, 2, 3].map(function(n) {
        return Math.round(a[n] + (b[n] - a[n]) * t);
      }) + ')';
    }
  }
}

function waveColor(v) {
  var c = Math.round(267 - 47 * v);
  return 'rgb(' + c + ',' + c + ',255)';
}

function cloudColor(v) {
  var c = Math.round(255 - 1.35 * v);
  return 'rgb(' + c + ',' + c + ',' + c + ')';
}

function rainColor(v) {
  var c = Math.round(255 - 52 * v);
  return 'rgb(' + c + ',' + c + ',255)';
}

function periodColor(v) {
  var c = v > 10 ? Math.round(255 - 16 * (v - 10)) : 255;
  return 'rgb(255,' + c + ',' + c + ')';
}

function row(label, values, color, text, rowClass) {
  var html = '<tr class="' + (rowClass || '') + '">' + label;
  values.split(' ').forEach(function(v) {
    if (v === '_') {
      html += '<td></td>';
      return;
    }
    var style = color ? ' style="background:' + color(+v) + '"' : '';
    html += '<td' + style + '>' + (text ? text(+v) : v) + '</td>';
  });
  return html + '</tr>';
}

function th(text, span) {
  return '<th' + (span ? ' rowspan="' + span + '"' : '') + '>' + text + '</th>';
}

function arrow(deg) {
  return '<svg><use href="#i-arrow" transform="rotate(' + deg + ' 10 10)"/></svg>';
}

function stars(n) {
  return new Array(n + 1).join('<svg><use href="#i-star"/></svg>');
}

function cloudText(v) {
  return v < 5 ? '' : v;
}

function rainText(v) {
  return v < 0.05 ? '' : v;
}

function head(label) {
  var cols = '<col class="label-col">';
  var html = '';
  days.forEach(function(day, i) {
    day[2].split(' ').forEach(function(hour) {
      cols += '<col class="hour-col">';
      html += '<td class="' + (i % 2 ? '' : 'odd') + '">' + day[0] + '<br>' + day[1] + '.<br>' + hour + 'h</td>';
    });
  });
  return '<colgroup>' + cols + '</colgroup><tr class="head">' + th(label) + html + '</tr>';
}

function wind(model) {
  return row(th('Скорость ветра (узлы)'), model.speed, windColor, Math.round) +
    row(th('Порывы ветра (узлы)'), model.gust, windColor, Math.round) +
    row(th('Направление ветра (→)'), model.dir, null, arrow, 'arrows') +
    row(th('Волна (m)'), waves, waveColor);
}

document.querySelector('#wg').innerHTML = head('Updated:<br>15.3. 12:51 EET') + wind(wg) +
  row(th('Период волны (с)'), wg.period, periodColor, Math.round) +
  row(th('Направление волн (→)'), wg.waveDir, null, arrow, 'arrows') +
  row(th('*Температура (°C)'), wg.temp) +
  row(th('*Изотерма 0° (м)'), wg.iso) +
  row(th('Облачность (%)<br>высокая / средняя /<br>низкая', 3), wg.high, cloudColor, cloudText, 'cloud') +
  row('', wg.mid, cloudColor, cloudText, 'cloud') +
  row('', wg.low, cloudColor, cloudText, 'cloud-last') +
  row(th('*Осадки (мм/1ч)'), wg.rain, rainColor, rainText, 'rain') +
  row(th('Рейтинг Windguru'), wg.stars, null, stars, 'stars');

document.querySelector('#gfs').innerHTML = head('Init:<br>15.03.2020<br>06 UTC') + wind(gfs);
```
